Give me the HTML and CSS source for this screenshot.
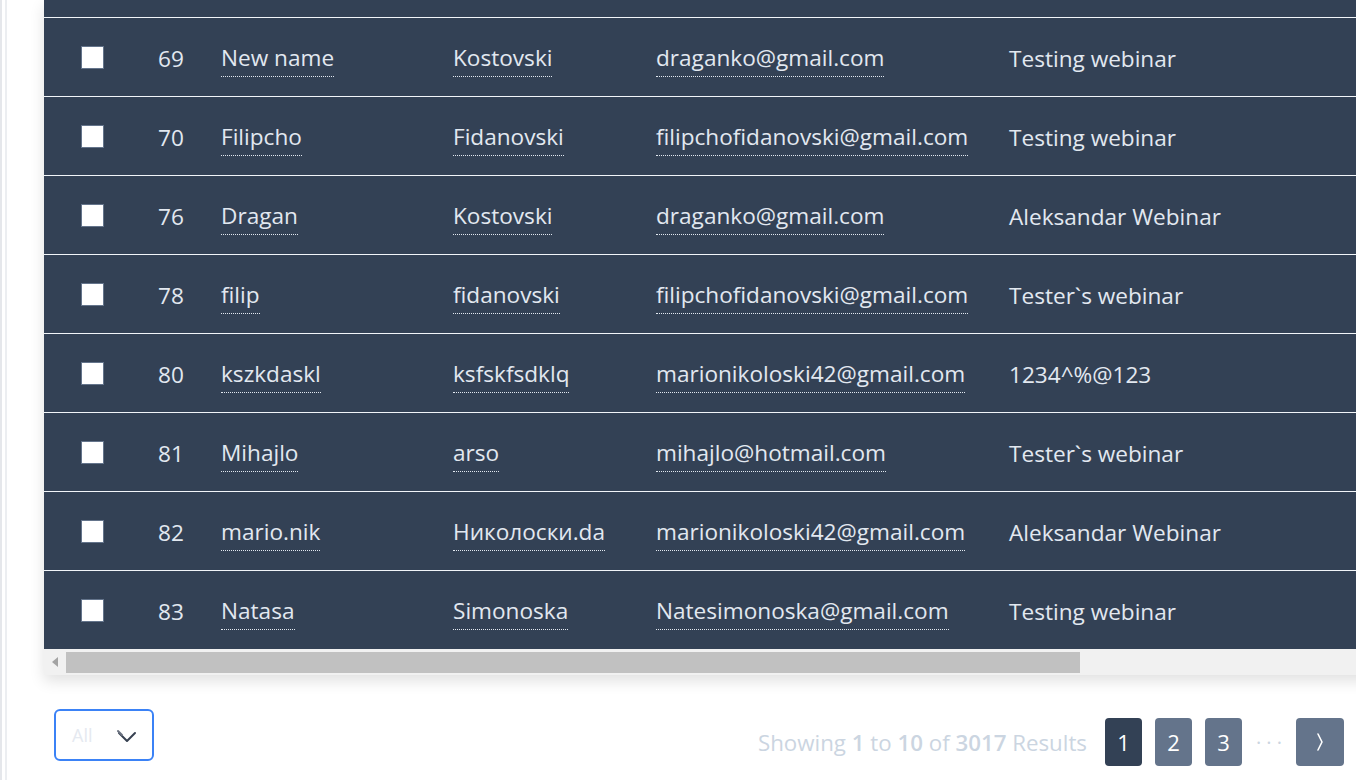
FILE: index.html
```html
<!DOCTYPE html>
<html lang="en">
<head>
  <meta charset="UTF-8" />
  <meta name="viewport" content="width=device-width, initial-scale=1.0"/>
  <title>Attendees</title>
  <link rel="stylesheet" href="styles.css">
</head>
<body>

  <div class="side-rail"></div>

  <main class="content">

    <!-- Attendees table -->
    <div class="card">
      <table class="attendees">
        <colgroup>
          <col class="w-check">
          <col class="w-id">
          <col class="w-first">
          <col class="w-last">
          <col class="w-email">
          <col>
        </colgroup>
        <tbody>
          <tr class="cut-row"><td colspan="6"></td></tr>
          <tr>
            <td class="col-check"><span class="box"></span></td>
            <td>69</td>
            <td><span class="dotted">New name</span></td>
            <td><span class="dotted">Kostovski</span></td>
            <td><span class="dotted">draganko@gmail.com</span></td>
            <td>Testing webinar</td>
          </tr>
          <tr>
            <td class="col-check"><span class="box"></span></td>
            <td>70</td>
            <td><span class="dotted">Filipcho</span></td>
            <td><span class="dotted">Fidanovski</span></td>
            <td><span class="dotted">filipchofidanovski@gmail.com</span></td>
            <td>Testing webinar</td>
          </tr>
          <tr>
            <td class="col-check"><span class="box"></span></td>
            <td>76</td>
            <td><span class="dotted">Dragan</span></td>
            <td><span class="dotted">Kostovski</span></td>
            <td><span class="dotted">draganko@gmail.com</span></td>
            <td>Aleksandar Webinar</td>
          </tr>
          <tr>
            <td class="col-check"><span class="box"></span></td>
            <td>78</td>
            <td><span class="dotted">filip</span></td>
            <td><span class="dotted">fidanovski</span></td>
            <td><span class="dotted">filipchofidanovski@gmail.com</span></td>
            <td>Tester`s webinar</td>
          </tr>
          <tr>
            <td class="col-check"><span class="box"></span></td>
            <td>80</td>
            <td><span class="dotted">kszkdaskl</span></td>
            <td><span class="dotted">ksfskfsdklq</span></td>
            <td><span class="dotted">marionikoloski42@gmail.com</span></td>
            <td>1234^%@123</td>
          </tr>
          <tr>
            <td class="col-check"><span class="box"></span></td>
            <td>81</td>
            <td><span class="dotted">Mihajlo</span></td>
            <td><span class="dotted">arso</span></td>
            <td><span class="dotted">mihajlo@hotmail.com</span></td>
            <td>Tester`s webinar</td>
          </tr>
          <tr>
            <td class="col-check"><span class="box"></span></td>
            <td>82</td>
            <td><span class="dotted">mario.nik</span></td>
            <td><span class="dotted">Николоски.da</span></td>
            <td><span class="dotted">marionikoloski42@gmail.com</span></td>
            <td>Aleksandar Webinar</td>
          </tr>
          <tr>
            <td class="col-check"><span class="box"></span></td>
            <td>83</td>
            <td><span class="dotted">Natasa</span></td>
            <td><span class="dotted">Simonoska</span></td>
            <td><span class="dotted">Natesimonoska@gmail.com</span></td>
            <td>Testing webinar</td>
          </tr>
        </tbody>
      </table>

      <div class="hscroll">
        <span class="hscroll-arrow"></span>
        <span class="hscroll-thumb"></span>
      </div>
    </div>

    <!-- Footer: page size + pagination -->
    <div class="table-footer">
      <div class="page-size">
        <span class="page-size-value">All</span>
        <svg class="page-size-icon" width="22" height="20" viewBox="0 0 22 20" fill="none">
          <path d="M3 6 L11 14 L19 6" stroke="#374151" stroke-width="2" stroke-linecap="round" stroke-linejoin="round"/>
          <path d="M2 4 L6 8" stroke="#6b7280" stroke-width="2" stroke-linecap="round"/>
        </svg>
      </div>

      <div class="pager">
        <span class="pager-info">Showing <b>1</b> to <b>10</b> of <b>3017</b> Results</span>
        <button class="page active">1</button>
        <button class="page">2</button>
        <button class="page">3</button>
        <span class="page-dots">· · ·</span>
        <button class="page next">
          <svg width="10" height="22" viewBox="0 0 10 22" fill="none">
            <path d="M3 3 L7 11 L3 19" stroke="#fff" stroke-width="1.6" stroke-linecap="round" stroke-linejoin="round"/>
          </svg>
        </button>
      </div>
    </div>

  </main>

</body>
</html>
```

FILE: styles.css
```css
body {
  margin: 0;
  display: flex;
  height: 780px;
  overflow: hidden;
  background: #fff;
  font-family: "Open Sans", "Noto Sans", sans-serif;
  color: #e2e8f0;
}

.side-rail {
  width: 44px;
  flex-shrink: 0;
  background:
    linear-gradient(to right, #e5e7eb 0, #e5e7eb 2px, #fff 2px, #fff 5px, #eceef1 5px, #eceef1 7px, #fff 7px);
}

.content {
  width: 1312px;
  flex-shrink: 0;
}

.card {
  width: 1340px;
  background: #f1f1f1;
  box-shadow: 0 6px 14px rgba(0, 0, 0, 0.12);
}

.attendees {
  width: 100%;
  table-layout: fixed;
  border-collapse: collapse;
  background: #334155;
  font-size: 22.6px;
}

.w-check { width: 114px; }
.w-id { width: 63px; }
.w-first { width: 232px; }
.w-last { width: 203px; }
.w-email { width: 353px; }

.attendees tr {
  height: 79px;
  border-top: 1px solid #f1f5f9;
}

.attendees tr.cut-row {
  height: 17px;
  border-top: none;
}

.attendees td {
  padding: 3px 0 0;
  white-space: nowrap;
  vertical-align: middle;
}

.attendees tr.cut-row td {
  padding: 0;
}

.attendees td.col-check {
  padding: 0 0 0 37px;
}

.box {
  display: block;
  width: 21px;
  height: 21px;
  background: #fff;
  border: 1px solid #64748b;
  margin-top: 2px;
}

.dotted {
  display: inline-block;
  margin-top: 3px;
  padding-bottom: 3px;
  border-bottom: 1px dotted #e2e8f0;
  line-height: 30px;
}

.hscroll {
  height: 26px;
  display: flex;
  align-items: center;
  padding-left: 2px;
}

.hscroll-arrow {
  width: 0;
  height: 0;
  margin: 0 8px 0 6px;
  border-top: 5px solid transparent;
  border-bottom: 5px solid transparent;
  border-right: 6px solid #a3a3a3;
}

.hscroll-thumb {
  width: 1014px;
  height: 21px;
  background: #c1c1c1;
}

.table-footer {
  display: flex;
  justify-content: space-between;
  align-items: center;
  padding: 29px 12px 0 10px;
}

.page-size {
  border: 2px solid #3b82f6;
  border-radius: 6px;
  display: flex;
  align-items: center;
  justify-content: space-between;
  padding: 0 14px 0 16px;
  box-sizing: border-box;
  width: 100px;
  height: 52px;
}

.page-size-value {
  font-size: 18px;
  color: #e5e9f0;
}

.page-size-icon {
  margin-top: 3px;
}

.pager {
  display: flex;
  align-items: center;
  gap: 13px;
  margin-top: 14px;
}

.pager-info {
  font-size: 22.3px;
  color: #cbd5e1;
  margin-right: 5px;
}

.pager-info b {
  font-weight: 600;
}

.page {
  width: 37px;
  height: 48px;
  border: none;
  border-radius: 4px;
  background: #64748b;
  color: #fff;
  font-family: inherit;
  font-size: 22px;
  padding: 0;
}

.page.active {
  background: #334155;
}

.page.next {
  width: 48px;
  display: flex;
  align-items: center;
  justify-content: center;
}

.page-dots {
  width: 30px;
  margin: 0 -1px 0 -1px;
  text-align: center;
  color: #cbd5e1;
  font-size: 20px;
}
```
